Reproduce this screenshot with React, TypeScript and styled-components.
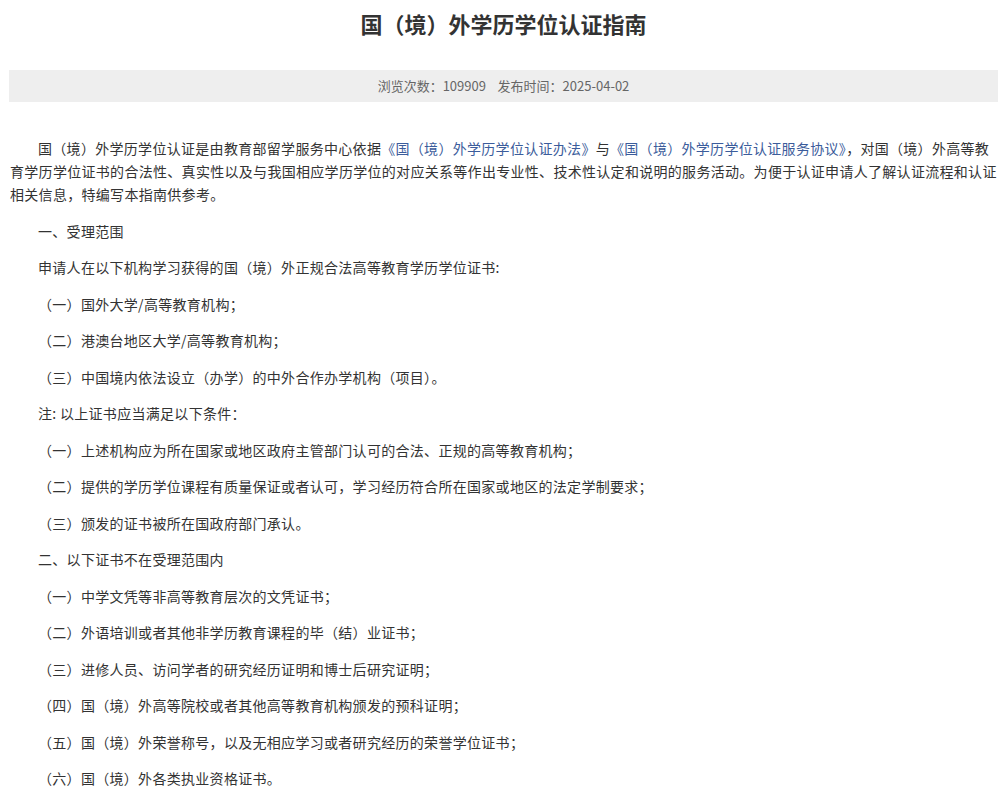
import { createGlobalStyle } from 'styled-components';
import styled from 'styled-components';

const Global = createGlobalStyle`
  body {
    margin: 0;
    background: #fff;
    font-family: "Microsoft YaHei", "Noto Sans CJK SC", sans-serif;
    color: #333;
  }
`;

const Page = styled.div`
  padding: 0 7px 0 9px;
`;

const Title = styled.h1`
  margin: 0;
  padding-top: 6px;
  height: 64px;
  text-align: center;
  font-size: 22px;
  font-weight: bold;
  color: #333;
  line-height: 34px;
`;

const Meta = styled.div`
  background: #eeeeee;
  height: 32px;
  line-height: 32px;
  text-align: center;
  font-size: 13px;
  color: #666;
`;

const Content = styled.div`
  padding: 35px 1px 0 1px;
  font-size: 14px;
  line-height: 23px;
  letter-spacing: 0.3px;
  color: #333;
`;

const P = styled.p<{ $indent?: boolean }>`
  margin: 0 0 13.5px;
  text-indent: ${(p) => (p.$indent ? '2em' : '0')};
  padding-left: ${(p) => (p.$indent ? '0' : '28px')};
`;

const Link = styled.span`
  color: #3b5c9b;
`;

const items = [
  '一、受理范围',
  '申请人在以下机构学习获得的国（境）外正规合法高等教育学历学位证书:',
  '（一）国外大学/高等教育机构；',
  '（二）港澳台地区大学/高等教育机构；',
  '（三）中国境内依法设立（办学）的中外合作办学机构（项目）。',
  '注: 以上证书应当满足以下条件：',
  '（一）上述机构应为所在国家或地区政府主管部门认可的合法、正规的高等教育机构；',
  '（二）提供的学历学位课程有质量保证或者认可，学习经历符合所在国家或地区的法定学制要求；',
  '（三）颁发的证书被所在国政府部门承认。',
  '二、以下证书不在受理范围内',
  '（一）中学文凭等非高等教育层次的文凭证书；',
  '（二）外语培训或者其他非学历教育课程的毕（结）业证书；',
  '（三）进修人员、访问学者的研究经历证明和博士后研究证明；',
  '（四）国（境）外高等院校或者其他高等教育机构颁发的预科证明；',
  '（五）国（境）外荣誉称号，以及无相应学习或者研究经历的荣誉学位证书；',
  '（六）国（境）外各类执业资格证书。',
];

export default function App() {
  return (
    <Page>
      <Global />
      <Title>国（境）外学历学位认证指南</Title>
      <Meta>浏览次数：109909&nbsp;&nbsp;&nbsp;&nbsp;发布时间：2025-04-02</Meta>
      <Content>
        <P $indent>
          国（境）外学历学位认证是由教育部留学服务中心依据<Link>《国（境）外学历学位认证办法》</Link>与
          <Link>《国（境）外学历学位认证服务协议》</Link>，对国（境）外高等教育学历学位证书的合法性、真实性以及与我国相应学历学位的对应关系等作出专业性、技术性认定和说明的服务活动。为便于认证申请人了解认证流程和认证相关信息，特编写本指南供参考。
        </P>
        {items.map((t, i) => (
          <P key={i}>{t}</P>
        ))}
      </Content>
    </Page>
  );
}
